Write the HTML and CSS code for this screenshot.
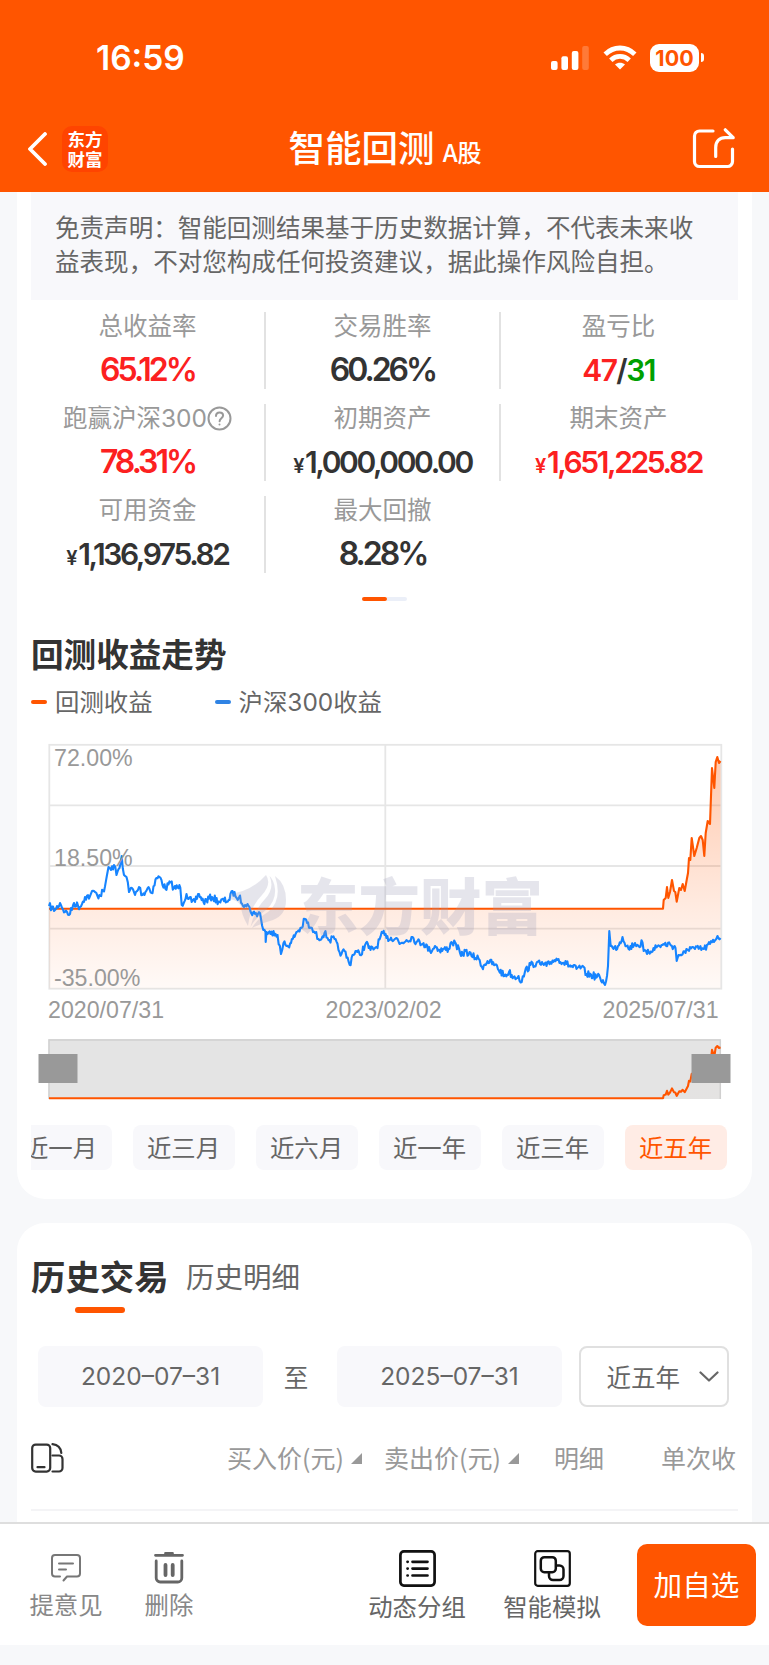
FILE: index.html
```html
<!DOCTYPE html>
<html lang="zh-CN">
<head>
    <meta charset="UTF-8">
    <meta name="viewport" content="width=device-width, initial-scale=1.0">
    <title>智能回测</title>
    <link rel="stylesheet" href="styles.css">
</head>
<body>
    <header class="header">
        <div class="status-bar">
            <span class="time">16:59</span>
            <div class="status-icons">
                <svg width="38" height="24" viewBox="0 0 38 24" fill="#fff">
                    <rect x="0" y="15" width="6.6" height="9" rx="2"/>
                    <rect x="10.4" y="10.3" width="6.6" height="13.7" rx="2"/>
                    <rect x="20.8" y="5" width="6.6" height="19" rx="2"/>
                    <rect x="31.2" y="0" width="6.6" height="24" rx="2" opacity=".22"/>
                </svg>
                <svg class="wifi" width="34" height="25" viewBox="0 0 34 25" fill="none" stroke="#fff" stroke-width="4.8">
                    <path d="M2.2 9.3C10.5 .9 23.5 .9 31.8 9.3"/>
                    <path d="M7.8 15.2C13 10.2 21 10.2 26.2 15.2"/>
                    <path d="M17 24.6l-5-5.1c2.900-2.500 7.100-2.500 10 0z" fill="#fff" stroke="none"/>
                </svg>
                <div class="battery">100</div>
                <span class="battery-tip"></span>
            </div>
        </div>
        <div class="nav">
            <div class="nav-left">
                <svg width="20" height="34" viewBox="0 0 20 34" fill="none" stroke="#fff" stroke-width="3.8" stroke-linecap="round" stroke-linejoin="round">
                    <path d="M17 2L2 17l15 15"/>
                </svg>
                <div class="app-logo">东方<br>财富</div>
            </div>
            <h1 class="nav-title">智能回测 <small>A股</small></h1>
            <svg class="share" width="44" height="42" viewBox="0 0 44 42" fill="none" stroke="#fff" stroke-width="3.2" stroke-linecap="round" stroke-linejoin="round">
                <path d="M21 3H7.500a5 5 0 0 0-5 5V33.500a5 5 0 0 0 5 5h28a5 5 0 0 0 5-5V21"/>
                <path d="M23.700 28.500V19.500c0-6.500 4-9.800 9.500-9.800h8L33.300 1.800"/>
            </svg>
        </div>
    </header>

    <main class="content">
        <section class="card result-card">
            <p class="disclaimer">免责声明：智能回测结果基于历史数据计算，不代表未来收益表现，不对您构成任何投资建议，据此操作风险自担。</p>

            <div class="stats">
                <div class="stat">
                    <span class="label">总收益率</span>
                    <span class="value red">65.12%</span>
                </div>
                <div class="stat">
                    <span class="label">交易胜率</span>
                    <span class="value">60.26%</span>
                </div>
                <div class="stat">
                    <span class="label">盈亏比</span>
                    <span class="value ratio"><i class="red">47</i>/<i class="green">31</i></span>
                </div>
                <div class="stat">
                    <span class="label">跑赢沪深300<svg width="25" height="25" viewBox="0 0 25 25" fill="none" stroke="#999" stroke-width="2" stroke-linecap="round"><circle cx="12.500" cy="12.500" r="11"/><path d="M9 10c0-2.200 1.500-3.600 3.600-3.600s3.500 1.400 3.500 3.200c0 2.600-3.500 2.700-3.500 5.600"/><path d="M12.500 18.400v.2"/></svg></span>
                    <span class="value red">78.31%</span>
                </div>
                <div class="stat">
                    <span class="label">初期资产</span>
                    <span class="value money"><small>¥</small>1,000,000.00</span>
                </div>
                <div class="stat">
                    <span class="label">期末资产</span>
                    <span class="value money red"><small>¥</small>1,651,225.82</span>
                </div>
                <div class="stat">
                    <span class="label">可用资金</span>
                    <span class="value money"><small>¥</small>1,136,975.82</span>
                </div>
                <div class="stat">
                    <span class="label">最大回撤</span>
                    <span class="value">8.28%</span>
                </div>
            </div>

            <div class="pager"><span class="active"></span><span></span></div>

            <h2 class="section-title">回测收益走势</h2>
            <div class="legend">
                <span class="legend-item">回测收益</span>
                <span class="legend-item blue">沪深300收益</span>
            </div>

            <svg class="chart" width="735" height="300" viewBox="17 730 735 300">
                <defs>
                    <linearGradient id="area" x1="0" y1="757" x2="0" y2="989" gradientUnits="userSpaceOnUse">
                        <stop offset="0" stop-color="#ff5500" stop-opacity=".32"/>
                        <stop offset=".65" stop-color="#ff5500" stop-opacity=".12"/>
                        <stop offset="1" stop-color="#ff5500" stop-opacity=".03"/>
                    </linearGradient>
                </defs>
                <g fill="none" stroke="#e6e6e6" stroke-width="1.800">
                    <rect x="49.300" y="744.800" width="672" height="243.900"/>
                    <path d="M49 805.300H721M49 866H721M49 928.600H721M385.300 745V989"/>
                </g>
                <path id="profit-area" fill="url(#area)"/>
                <path id="profit-line" class="line-orange"/>
                <path id="index-line" class="line-blue"/>
                <g class="axis-text">
                    <text x="54" y="765.500">72.00%</text>
                    <text x="54" y="865.500">18.50%</text>
                    <text x="54" y="985.500">-35.00%</text>
                    <text x="48" y="1017.500">2020/07/31</text>
                    <text x="325.500" y="1017.500">2023/02/02</text>
                    <text x="602.500" y="1017.500">2025/07/31</text>
                </g>
                <g class="watermark">
                    <path d="M229 894Q251 892 266 875Q272 884 262 895Q250 907 248 926Q241 914 241 906Q238 900 229 899Z"/>
                    <path d="M269.500 876Q275 888 265 899Q254 911 250.500 927Q256 917 266 910Q276 901 275 889Q274 880 269.500 876Z"/>
                    <path d="M275 876Q286 884 286 900Q286 915 273 920Q262 923 252 928Q258 918 268 912Q283 900 275 876Z"/>
                    <text x="297" y="930">东方财富</text>
                </g>
            </svg>

            <svg class="slider" width="735" height="65" viewBox="17 1037 735 65">
                <rect x="48.500" y="1039" width="672" height="60" fill="#e4e4e4"/>
                <path d="M49 1099V1040H720.300V1099" fill="none" stroke="#d0d0d0" stroke-width="1.500"/>
                <path id="mini-area" fill="url(#area)" opacity=".3"/>
                <path id="mini-line" class="line-orange"/>
                <rect x="38.500" y="1054" width="39" height="29" fill="#999"/>
                <rect x="691.500" y="1054" width="39" height="29" fill="#999"/>
            </svg>

            <div class="ranges">
                <span class="range">近一月</span>
                <span class="range">近三月</span>
                <span class="range">近六月</span>
                <span class="range">近一年</span>
                <span class="range">近三年</span>
                <span class="range active">近五年</span>
            </div>
        </section>

        <section class="card history-card">
            <div class="tabs">
                <span class="tab active">历史交易</span>
                <span class="tab">历史明细</span>
            </div>
            <div class="filters">
                <span class="date">2020–07–31</span>
                <span class="to">至</span>
                <span class="date">2025–07–31</span>
                <span class="select">近五年
                    <svg width="20" height="12" viewBox="0 0 20 12" fill="none" stroke="#666" stroke-width="2.200" stroke-linecap="round" stroke-linejoin="round"><path d="M1.500 1.500L10 9.500l8.500-8"/></svg>
                </span>
            </div>
            <div class="table-head">
                <svg class="rotate" width="33" height="30" viewBox="0 0 33 30" fill="none" stroke="#333" stroke-width="2.200" stroke-linecap="round" stroke-linejoin="round">
                    <rect x="1.200" y="1.600" width="18" height="27" rx="3.500"/>
                    <path d="M6.500 24.200h7M21.500 1.200c5 .6 8.300 4 8.800 8.600M21.500 12.500H28a3.500 3.500 0 0 1 3.500 3.500v9a3.500 3.500 0 0 1-3.500 3.500h-6.500"/>
                </svg>
                <span class="col buy">买入价(元)<b class="sort"></b></span>
                <span class="col sell">卖出价(元)<b class="sort"></b></span>
                <span class="col detail">明细</span>
                <span class="col single">单次收</span>
            </div>
        </section>
    </main>

    <footer class="toolbar">
        <div class="tool feedback">
            <svg width="30" height="36" viewBox="0 0 30 36" fill="none" stroke="#777" stroke-width="2" stroke-linecap="round" stroke-linejoin="round">
                <path d="M9 27.500H4a3 3 0 0 1-3-3V9a3 3 0 0 1 3-3h22a3 3 0 0 1 3 3v15.500a3 3 0 0 1-3 3H16l-3.500 4"/>
                <path d="M8 14.500h14M8 20.500h7"/>
            </svg>
            <span>提意见</span>
        </div>
        <div class="tool remove">
            <svg width="30" height="36" viewBox="0 0 30 36" fill="none" stroke="#666" stroke-width="2.800" stroke-linecap="round">
                <path d="M1.500 6.300h27M11.500 4.300h7"/>
                <path d="M2.200 12v17a4 4 0 0 0 4 4h17.600a4 4 0 0 0 4-4V12" stroke-linejoin="round"/>
                <path d="M11.500 16v10M18.700 16v10" stroke-width="3.800"/>
            </svg>
            <span>删除</span>
        </div>
        <div class="tool group">
            <svg width="37" height="37" viewBox="0 0 37 37" fill="none" stroke="#111" stroke-width="2.700" stroke-linecap="round">
                <rect x="1.400" y="1.400" width="34.200" height="34.200" rx="3.500"/>
                <path d="M13.500 11.800h15M13.500 18.600h15M13.500 25.500h15M8.500 11.800h.2M8.500 18.600h.2M8.500 25.500h.2"/>
            </svg>
            <span>动态分组</span>
        </div>
        <div class="tool simulate">
            <svg width="37" height="37" viewBox="0 0 37 37" fill="none" stroke="#111" stroke-width="2.500">
                <rect x="1.200" y="1.200" width="34.600" height="34.600" rx="2.500" stroke-width="2.200"/>
                <rect x="6.800" y="7.200" width="15" height="15" rx="3.500"/>
                <path d="M22 15.500h3.500a4 4 0 0 1 4 4V26a4 4 0 0 1-4 4H19a4 4 0 0 1-4-4v-3.500"/>
            </svg>
            <span>智能模拟</span>
        </div>
        <button class="add-btn">加自选</button>
    </footer>
    <script src="script.js"></script>
</body>
</html>
```

FILE: styles.css
```css
* {
    margin: 0;
    padding: 0;
    box-sizing: border-box;
}

body {
    width: 769px;
    height: 1665px;
    display: flex;
    flex-direction: column;
    overflow: hidden;
    background: #f7f8fa;
    color: #333;
    font-family: "Noto Sans CJK SC", sans-serif;
}

svg {
    display: block;
    flex: none;
}

/* header */
.header {
    height: 191.500px;
    flex: none;
    background: #ff5500;
    color: #fff;
}

.status-bar {
    height: 115px;
    padding: 0 65px 0 96px;
    display: flex;
    justify-content: space-between;
    align-items: center;
    font-family: Inter, sans-serif;
}

.time {
    font-size: 33.500px;
    font-weight: 600;
}

.status-icons {
    display: flex;
    align-items: center;
}

.wifi {
    margin-left: 14px;
}

.battery {
    width: 49px;
    height: 28px;
    margin-left: 13px;
    border-radius: 9px;
    background: #fff;
    color: #ff5500;
    font-size: 21.500px;
    font-weight: 700;
    line-height: 28px;
    text-align: center;
}

.battery-tip {
    width: 3px;
    height: 9px;
    margin-left: 2px;
    border-radius: 0 4px 4px 0;
    background: #fff;
}

.nav {
    height: 68px;
    padding: 0 33px 0 28px;
    display: flex;
    align-items: center;
    justify-content: space-between;
}

.nav-left {
    width: 130px;
    display: flex;
    align-items: center;
    gap: 14px;
}

.app-logo {
    width: 46px;
    height: 46px;
    padding-top: 3px;
    border-radius: 10px;
    background: #ff4400;
    font-size: 17.500px;
    font-weight: 700;
    line-height: 19.500px;
    text-align: center;
}

.nav-title {
    flex: 1;
    padding-right: 80px;
    font-size: 36.500px;
    font-weight: 500;
    line-height: 50px;
    text-align: center;
    white-space: nowrap;
}

.nav-title small {
    font-size: 24px;
    font-weight: 500;
}

.content {
    height: 1330.500px;
    flex: none;
    padding: 0 17px;
    display: flex;
    flex-direction: column;
    gap: 24px;
    overflow: hidden;
}

.card {
    flex: none;
    background: #fff;
}

.result-card {
    height: 1007px;
    border-radius: 0 0 28px 28px;
}

.disclaimer {
    height: 108.500px;
    margin: 0 14px;
    padding: 18px 24px 0;
    background: #f8f8fb;
    color: #666;
    font-size: 24.560px;
    line-height: 34.400px;
}

/* stats */
.stats {
    margin: 12px 14px 0;
    display: grid;
    grid-template-columns: 235px 235px 237px;
    row-gap: 15px;
}

.stat {
    height: 77px;
    display: flex;
    flex-direction: column;
    align-items: center;
    border-right: 2px solid #e2e2e2;
}

.stat:nth-child(3n),
.stat:last-child {
    border-right-color: transparent;
}

.label {
    height: 30px;
    display: flex;
    align-items: center;
    color: #999;
    font-family: Inter, "Noto Sans CJK SC", sans-serif;
    font-size: 24.500px;
    line-height: 28px;
}

.value {
    height: 54px;
    font-family: Inter, sans-serif;
    font-size: 32px;
    font-weight: 600;
    line-height: 59px;
    letter-spacing: -3px;
    white-space: nowrap;
}

.value i {
    font-style: normal;
}

.ratio {
    font-size: 30px;
    line-height: 60px;
    letter-spacing: -1.600px;
}

.money {
    font-size: 30px;
    line-height: 61px;
    letter-spacing: -2.400px;
}

.money small {
    margin-right: 3px;
    font-size: 20px;
}

.red {
    color: #fc2020;
}

.green {
    color: #00a000;
}

.pager {
    margin-top: 23.500px;
    padding-left: 344.500px;
    display: flex;
}

.pager span {
    width: 20px;
    height: 4px;
    border-radius: 0 2px 2px 0;
    background: #ebeff8;
}

.pager .active {
    width: 25px;
    border-radius: 2px;
    background: #ff5500;
}

.section-title {
    margin: 28px 14px 0;
    font-size: 32.600px;
    font-weight: 700;
    line-height: 48px;
}

.legend {
    margin-top: 7.500px;
    padding-left: 14px;
    display: flex;
    gap: 62px;
    color: #666;
    font-family: Inter, "Noto Sans CJK SC", sans-serif;
    font-size: 24.400px;
    line-height: 36px;
}

.legend-item {
    display: flex;
    align-items: center;
    gap: 8px;
}

.legend-item::before {
    content: "";
    width: 16px;
    height: 4px;
    border-radius: 2px;
    background: #ff5500;
}

.blue::before {
    background: #2f83e4;
}

/* charts */
.chart {
    margin-top: 10px;
}

.axis-text {
    font-family: "Liberation Sans", sans-serif;
    font-size: 23.200px;
    fill: #999;
}

.line-orange,
.line-blue {
    fill: none;
    stroke: #ff5500;
    stroke-width: 2.100;
    stroke-linejoin: round;
}

.line-blue {
    stroke: #1684ff;
}

.watermark {
    fill: #9c9cb8;
    opacity: .25;
    font-size: 61.500px;
    font-weight: 900;
}

.slider {
    margin-top: 7px;
}

.ranges {
    margin: 23px 14px 0;
    height: 45px;
    display: flex;
    justify-content: flex-end;
    gap: 21px;
    padding-right: 11.500px;
    overflow: hidden;
}

.range {
    width: 102px;
    flex: none;
    border-radius: 8px;
    background: #f8f8fb;
    color: #666;
    font-size: 24.400px;
    line-height: 43px;
    text-align: center;
}

.range.active {
    background: #ffece5;
    color: #ff5500;
}

/* history */
.history-card {
    height: 400px;
    padding: 0 14px;
    border-radius: 28px 28px 0 0;
}

.tabs {
    height: 123.500px;
    padding-top: 28px;
    display: flex;
    gap: 17.500px;
}

.tab {
    color: #666;
    font-size: 28.500px;
    line-height: 49px;
}

.tab.active {
    display: flex;
    flex-direction: column;
    align-items: center;
    color: #333;
    font-size: 34.400px;
    font-weight: 700;
}

.tab.active::after {
    content: "";
    width: 50px;
    height: 6px;
    margin-top: 7px;
    border-radius: 3px;
    background: #ff5500;
}

.filters {
    padding-left: 7px;
    display: flex;
    color: #666;
    font-size: 24.500px;
    line-height: 61px;
}

.date {
    width: 225px;
    border-radius: 8px;
    background: #f8f8fb;
    font-family: Inter, sans-serif;
    text-align: center;
}

.to {
    width: 74px;
    padding-right: 8px;
    text-align: center;
}

.select {
    width: 150px;
    height: 61px;
    margin-left: 16.500px;
    padding: 0 8px 0 26px;
    display: flex;
    align-items: center;
    justify-content: space-between;
    border: 2px solid #e0e0e0;
    border-radius: 8px;
}

.table-head {
    height: 104px;
    display: flex;
    align-items: center;
    border-bottom: 2px solid #f4f4f6;
    color: #999;
    font-size: 25px;
    line-height: 36px;
    white-space: nowrap;
}

.col {
    margin-top: -3px;
    display: flex;
    align-items: center;
}

.buy {
    width: 157px;
    margin-left: 163px;
}

.sell {
    width: 170px;
}

.detail {
    width: 107px;
}

.sort {
    margin: 4px 0 0 7px;
    border-left: 11px solid transparent;
    border-bottom: 11px solid #999;
}

/* bottom bar */
.toolbar {
    height: 123px;
    flex: none;
    padding: 0 13px 0 17px;
    display: flex;
    border-top: 2px solid #dedede;
    background: #fff;
    color: #666;
    font-size: 24.400px;
    line-height: 36px;
}

.tool {
    display: flex;
    flex-direction: column;
    align-items: center;
    gap: 1px;
}

.feedback {
    width: 98px;
    padding-top: 25px;
    color: #888;
}

.remove {
    width: 108px;
    padding-top: 25px;
    color: #888;
}

.group {
    width: 136px;
    margin-left: 126px;
    padding-top: 26px;
}

.simulate {
    width: 134px;
    padding-top: 26px;
}

.add-btn {
    width: 119px;
    height: 82px;
    margin: 20px 0 0 auto;
    padding-bottom: 4px;
    border: none;
    border-radius: 10px;
    background: #ff5500;
    color: #fff;
    font-family: inherit;
    font-size: 28.600px;
}
```

FILE: script.js
```javascript
// key points of each series, x and y in chart units
const profit = [
    [49, 908.7], [663, 908.7], [663.7, 900], [665.7, 898], [667, 887], [668.3, 898], [670, 892],
    [672, 880], [674, 891], [675.3, 892], [676.7, 901.7], [679.3, 888], [681, 890], [682.7, 884],
    [684.7, 891], [686.7, 880], [688, 873], [689, 858], [690.3, 860], [691.7, 838], [694.3, 856],
    [696.7, 848], [699.3, 838], [701, 836], [702.7, 840], [704.3, 856], [705.7, 833], [707.7, 821],
    [710, 824], [712, 768], [714.3, 788], [715.7, 762], [717.3, 757], [719, 763], [720.5, 761]
];

const hs300 = [
    [49, 906], [55, 910], [60, 903], [65, 912], [70, 914], [74, 903], [80, 907], [85, 897],
    [90, 896], [94, 891], [97.5, 896], [104, 891.5], [107, 875], [108.5, 867], [111, 870],
    [114, 865], [116.5, 875], [119.5, 868], [121.7, 856], [124, 875], [126.5, 877], [129, 892],
    [132, 888], [135, 895], [139, 887], [142.5, 895], [148.5, 887], [151.5, 893], [156.5, 878],
    [159.5, 877], [165.5, 889], [170.5, 882.5], [174, 888], [180.3, 887.5], [181.7, 905],
    [186.5, 894], [191.7, 902], [195, 902], [199, 894], [203.5, 902], [212, 897], [218.5, 901.5],
    [229.5, 900], [232.5, 891], [235.5, 896.5], [239, 897.5], [245, 905], [247.5, 904],
    [250.5, 911.5], [255, 914], [260, 913], [263.3, 930], [265.5, 932], [265.7, 942], [266.5, 932],
    [270.5, 934], [273.5, 931], [277.5, 935], [281, 954], [283.5, 943], [286.5, 946], [291, 943],
    [296.5, 932], [301.5, 928], [305, 919], [310, 928], [315, 933], [318.5, 939], [324.5, 933],
    [329.5, 940], [334.5, 939], [338.5, 950], [341.5, 954], [344.5, 951], [349.7, 965],
    [352.5, 955], [355.5, 951], [360, 955], [366, 943], [370.5, 950], [376.5, 947], [382.7, 933],
    [386.5, 938], [396.5, 938], [399.5, 944], [406.5, 940], [412.5, 937], [416.5, 942],
    [423.5, 943], [430, 951], [435, 946], [439.5, 950], [448.5, 949], [451.5, 942], [456, 944],
    [461, 956], [465.5, 951], [471.5, 956], [478.5, 958.5], [482, 967], [487.5, 961], [495, 965],
    [504.5, 976], [509, 972], [513.5, 977], [518.5, 976], [521.7, 982], [525, 971.5], [530.5, 965],
    [536.5, 963], [546.5, 966], [552.5, 960.5], [558.5, 959], [566.5, 964], [576.5, 969],
    [581.5, 967], [586.5, 974], [600, 977.5], [604, 983.5], [606, 981.5], [608, 966],
    [609.3, 931], [610.7, 946], [613.5, 949], [618, 946], [622.5, 937], [628.5, 949], [635, 943],
    [638.5, 946], [642.5, 942.5], [643.7, 951], [647, 954], [653.5, 948], [661.5, 945],
    [670, 944], [675.5, 948], [676.7, 961], [678.5, 955], [685.5, 953], [690, 947], [695, 949],
    [704, 949], [710, 944], [715, 940.5], [717.5, 936], [720.5, 938]
];

let seed = 7;
function random() {
    seed = (seed * 16807) % 2147483647;
    return seed / 2147483647 - 0.5;
}

// fill in the daily moves between the key points
function daily(points, amount) {
    const out = [];
    for (let i = 0; i < points.length - 1; i++) {
        const [x1, y1] = points[i];
        const [x2, y2] = points[i + 1];
        out.push(points[i]);
        const steps = Math.floor((x2 - x1) / 0.9);
        for (let j = 1; j < steps; j++) {
            const t = j / steps;
            out.push([x1 + (x2 - x1) * t, y1 + (y2 - y1) * t + random() * amount]);
        }
    }
    out.push(points[points.length - 1]);
    return out;
}

function path(points) {
    return 'M' + points.map(p => p[0].toFixed(1) + ' ' + p[1].toFixed(1)).join('L');
}

function draw(id, d) {
    document.getElementById(id).setAttribute('d', d);
}

draw('profit-line', path(profit));
draw('profit-area', path(profit) + 'V988.5H49Z');
draw('index-line', path(daily(hs300, 7)));

// overview strip under the chart
const mini = profit.map(([x, y]) => [x, 1098.3 - (908.7 - y) * 0.345]);
draw('mini-line', path(mini));
draw('mini-area', path(mini) + 'V1099H49Z');
```
